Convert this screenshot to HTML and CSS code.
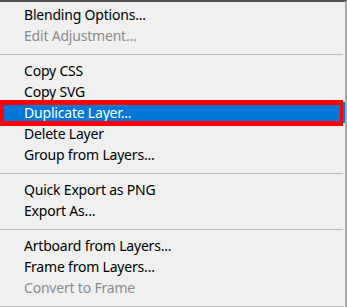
FILE: index.html
```html
<!DOCTYPE html>
<html>
<head>
<meta charset="utf-8">
<link rel="stylesheet" href="styles.css">
</head>
<body>
<div class="menu">
  <div class="item">Blending Options...</div>
  <div class="item disabled">Edit Adjustment...</div>
  <div class="sep"></div>
  <div class="item">Copy CSS</div>
  <div class="item">Copy SVG</div>
  <div class="item selected">Duplicate Layer...</div>
  <div class="item">Delete Layer</div>
  <div class="item">Group from Layers...</div>
  <div class="sep"></div>
  <div class="item">Quick Export as PNG</div>
  <div class="item">Export As...</div>
  <div class="sep"></div>
  <div class="item">Artboard from Layers...</div>
  <div class="item">Frame from Layers...</div>
  <div class="item disabled">Convert to Frame</div>
  <div class="end"></div>
</div>
</body>
</html>
```
FILE: styles.css
```css
html, body {
  margin: 0;
  padding: 0;
  background: #f0f0f0;
}
.menu {
  width: 347px;
  height: 307px;
  box-sizing: border-box;
  border-top: 2px solid #515151;
  border-right: 2px solid #a8a8a8;
  padding-top: 2px;
  display: flex;
  flex-direction: column;
  font-family: "Noto Sans", sans-serif;
  font-size: 14px;
  letter-spacing: -0.2px;
  color: #000;
  background: #f0f0f0;
}
.item {
  height: 21px;
  line-height: 22px;
  padding-left: 24px;
  white-space: nowrap;
  position: relative;
}
.disabled {
  color: #8c8c8c;
}
.selected {
  background: #0078d7;
  color: #fff;
}
.selected::after {
  content: "";
  position: absolute;
  left: 0;
  top: -2px;
  width: 343px;
  height: 26px;
  box-sizing: border-box;
  border: 5px solid #ff0000;
  border-left-width: 4px;
  border-right-width: 3px;
}
.sep {
  height: 14px;
  box-sizing: border-box;
  padding-top: 8px;
  flex-shrink: 0;
}
.sep::before {
  content: "";
  display: block;
  height: 1px;
  width: 343px;
  background: #bdbdbd;
}
.end {
  margin-top: auto;
  height: 1px;
  width: 344px;
  background: #bdbdbd;
}
```
